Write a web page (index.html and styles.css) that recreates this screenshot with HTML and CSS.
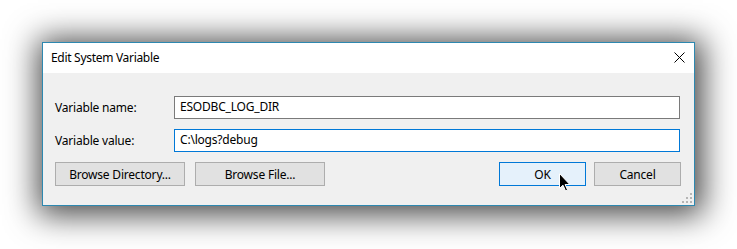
FILE: index.html
```html
<!DOCTYPE html>
<html>
<head>
<meta charset="utf-8">
<link rel="stylesheet" href="styles.css">
</head>
<body>
<div class="dialog">
  <div class="titlebar">
    <span class="title">Edit System Variable</span>
    <svg class="close" width="11" height="11" viewBox="0 0 11 11"><path d="M0.5 0.5 L10.5 10.5 M10.5 0.5 L0.5 10.5" stroke="#000" stroke-width="1" fill="none"/></svg>
  </div>
  <div class="content">
    <div class="row">
      <span class="label">Variable name:</span>
      <div class="input">ESODBC_LOG_DIR</div>
    </div>
    <div class="row">
      <span class="label">Variable value:</span>
      <div class="input focused">C:\logs?debug</div>
    </div>
    <div class="buttons">
      <div class="btn browse-dir">Browse Directory...</div>
      <div class="btn browse-file">Browse File...</div>
      <div class="spacer"></div>
      <div class="btn ok default">OK
        <svg class="cursor" width="12" height="19" viewBox="0 0 12 19"><path d="M0.5 0.5 L0.5 15.5 L4 12.2 L6.6 18 L8.6 17.1 L6.1 11.5 L10.8 11.5 Z" fill="#000" stroke="#fff" stroke-width="1"/></svg>
      </div>
      <div class="btn cancel">Cancel</div>
    </div>
    <svg class="grip" width="10" height="10" viewBox="0 0 10 10">
      <rect x="8" y="0" width="2" height="2" fill="#b5b5b5"/>
      <rect x="4" y="4" width="2" height="2" fill="#b5b5b5"/>
      <rect x="8" y="4" width="2" height="2" fill="#b5b5b5"/>
      <rect x="0" y="8" width="2" height="2" fill="#b5b5b5"/>
      <rect x="4" y="8" width="2" height="2" fill="#b5b5b5"/>
      <rect x="8" y="8" width="2" height="2" fill="#b5b5b5"/>
    </svg>
  </div>
</div>
</body>
</html>
```

FILE: styles.css
```css
html, body {
  margin: 0;
  padding: 0;
  background: #ffffff;
}
body {
  width: 737px;
  height: 249px;
  overflow: hidden;
  padding-top: 42px;
  padding-left: 42px;
  box-sizing: border-box;
  font-family: "Noto Sans", "Open Sans", sans-serif;
  font-size: 12px;
  color: #000;
}
.dialog {
  width: 653px;
  height: 164px;
  box-sizing: border-box;
  border: 1px solid #2d88b0;
  background: #f0f0f0;
  display: flex;
  flex-direction: column;
  box-shadow: 2px 3px 30px 6px rgba(0, 0, 0, 0.72);
}
.titlebar {
  height: 30px;
  background: #ffffff;
  display: flex;
  align-items: center;
  padding-left: 8px;
  padding-right: 9px;
  flex: none;
}
.title {
  flex: 1;
  font-size: 12px;
  letter-spacing: -0.3px;
  padding-bottom: 1px;
}
.close {
  display: block;
  margin-top: -2px;
}
.content {
  position: relative;
  flex: 1;
  padding: 23px 14px 0 12px;
}
.row {
  display: flex;
  align-items: center;
  height: 23px;
  margin-bottom: 10px;
}
.label {
  width: 119px;
  flex: none;
  letter-spacing: -0.2px;
}
.input {
  flex: 1;
  height: 23px;
  box-sizing: border-box;
  border: 1px solid #7a7a7a;
  background: #fff;
  padding-left: 5px;
  line-height: 20px;
  letter-spacing: -0.2px;
}
.input.focused {
  border-color: #0078d7;
}
.buttons {
  display: flex;
  margin-top: 6px;
  margin-right: -1px;
  gap: 10px;
}
.spacer {
  flex: 1;
}
.btn {
  position: relative;
  height: 24px;
  box-sizing: border-box;
  border: 1px solid #adadad;
  background: #e1e1e1;
  display: flex;
  align-items: center;
  justify-content: center;
  letter-spacing: -0.2px;
}
.browse-dir, .browse-file {
  width: 130px;
}
.ok, .cancel {
  width: 87px;
}
.ok {
  margin-right: -2px;
}
.btn.default {
  background: #e5f1fb;
  border-color: #0078d7;
}
.cursor {
  position: absolute;
  left: 59px;
  top: 10px;
}
.grip {
  position: absolute;
  right: 2px;
  bottom: 2px;
}
```
